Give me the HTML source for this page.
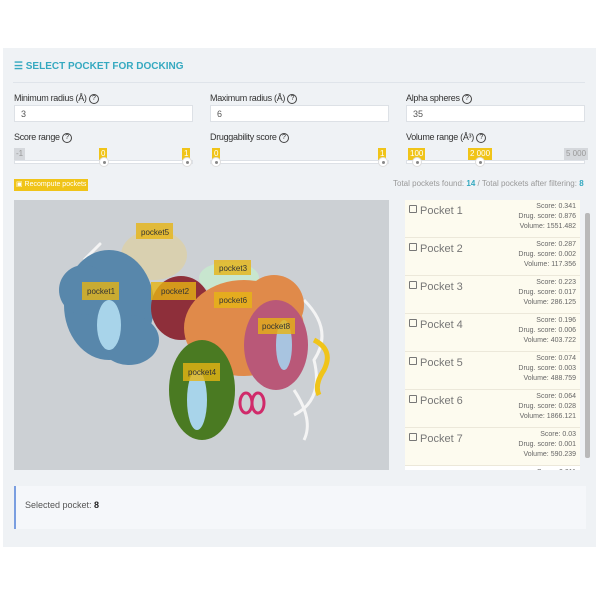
<!DOCTYPE html>
<html><head><style>
body{margin:0;width:600px;height:600px;background:#fff;font-family:"Liberation Sans",sans-serif;position:relative;overflow:hidden}
.panel{position:absolute;left:3px;top:48px;width:593px;height:499px;background:#eff2f5}
.a{position:absolute}
.t{font-size:11px;color:#333;letter-spacing:-0.3px}
.hdr{left:11px;top:13px;font-size:10px;font-weight:bold;color:#35a9c0}
.hr{left:10px;top:34px;width:572px;height:1px;background:#dfe4ea}
.inp{height:17px;background:#fff;border:1px solid #dde1e6;font-size:9px;color:#555;box-sizing:border-box;padding:3px 6px}
.q{display:inline-block;width:8px;height:8px;border:1px solid #444;border-radius:50%;font-size:7px;text-align:center;line-height:8px;vertical-align:1px}
.tag{position:absolute;font-size:8px;color:#fff;background:#f0c419;padding:1px 2px;height:10px;line-height:10px}
.gtag{background:#d5d8dc;color:#999}
.line{position:absolute;height:2px;background:#fff;border:1px solid #dde1e6}
.knob{position:absolute;width:8px;height:8px;border-radius:50%;background:#fff;border:1px solid #ddd}
.knob:after{content:"";position:absolute;left:2.5px;top:2.5px;width:3px;height:3px;border-radius:50%;background:#888}
.item{height:37px;background:#fdfbef;border-bottom:1px solid #ece8da;position:relative}
.item .n{position:absolute;left:4px;top:5px;font-size:11px;color:#777}
.item .n:before{content:"";display:inline-block;width:6px;height:6px;border:1px solid #777;border-radius:1px;margin-right:3px;vertical-align:1px}
.item .s{position:absolute;right:4px;top:2px;font-size:7px;color:#666;text-align:right;line-height:10px}
</style></head><body>
<div class="panel">
<div class="a hdr">&#9776; SELECT POCKET FOR DOCKING</div>
<div class="a hr"></div>
<div class="a t" style="left:11px;top:45px;font-size:9px">Minimum radius (Å) <span class="q">?</span></div>
<div class="a t" style="left:207px;top:45px;font-size:9px">Maximum radius (Å) <span class="q">?</span></div>
<div class="a t" style="left:403px;top:45px;font-size:9px">Alpha spheres <span class="q">?</span></div>
<div class="a inp" style="left:11px;top:57px;width:179px">3</div>
<div class="a inp" style="left:207px;top:57px;width:179px">6</div>
<div class="a inp" style="left:403px;top:57px;width:179px">35</div>
<div class="a t" style="left:11px;top:84px;font-size:9px">Score range <span class="q">?</span></div>
<div class="a t" style="left:207px;top:84px;font-size:9px">Druggability score <span class="q">?</span></div>
<div class="a t" style="left:403px;top:84px;font-size:9px">Volume range (Å³) <span class="q">?</span></div>
<div class="tag gtag" style="left:11px;top:100px">-1</div>
<div class="tag" style="left:96px;top:100px">0</div>
<div class="tag" style="left:179px;top:100px">1</div>
<div class="line" style="left:11px;top:112px;width:177px"></div>
<div class="knob" style="left:96px;top:109px"></div><div class="knob" style="left:179px;top:109px"></div>
<div class="tag" style="left:209px;top:100px">0</div>
<div class="tag" style="left:375px;top:100px">1</div>
<div class="line" style="left:207px;top:112px;width:177px"></div>
<div class="knob" style="left:208px;top:109px"></div><div class="knob" style="left:375px;top:109px"></div>
<div class="tag" style="left:405px;top:100px">100</div>
<div class="tag" style="left:465px;top:100px">2 000</div>
<div class="tag gtag" style="left:561px;top:100px">5 000</div>
<div class="line" style="left:403px;top:112px;width:177px"></div>
<div class="knob" style="left:409px;top:109px"></div><div class="knob" style="left:472px;top:109px"></div>
<div class="tag" style="left:11px;top:131px;font-size:7px">&#9635; Recompute pockets</div>
<div class="a" style="left:390px;top:131px;font-size:8px;color:#999">Total pockets found: <b style="color:#35a9c0">14</b> / Total pockets after filtering: <b style="color:#35a9c0">8</b></div>
<div class="a" style="left:11px;top:152px;width:375px;height:270px;background:#ccd0d4">
<svg width="375" height="270">
<g fill="none" stroke="#f4f4f4" stroke-width="3"><path d="M70 60 Q90 40 85 45"/><path d="M290 100 Q320 130 300 160 Q310 200 280 215"/><path d="M280 190 Q300 220 290 240"/></g>
<path d="M300 140 Q320 150 310 170 Q300 185 305 195" stroke="#f0c419" stroke-width="5" fill="none"/>
<g fill="none" stroke="#d02a6a" stroke-width="3"><ellipse cx="232" cy="203" rx="6" ry="10"/><ellipse cx="244" cy="203" rx="6" ry="10"/></g>
<ellipse cx="140" cy="55" rx="33" ry="25" fill="#d9d0b0"/>
<ellipse cx="95" cy="105" rx="45" ry="55" fill="#5887ab"/>
<ellipse cx="70" cy="90" rx="25" ry="25" fill="#5887ab"/>
<ellipse cx="115" cy="140" rx="30" ry="25" fill="#5887ab"/>
<ellipse cx="95" cy="125" rx="12" ry="25" fill="#a8d4ea"/>
<ellipse cx="215" cy="78" rx="30" ry="16" fill="#c8e6cf"/>
<ellipse cx="167" cy="108" rx="30" ry="32" fill="#8e2f3a"/>
<ellipse cx="230" cy="128" rx="60" ry="48" fill="#e08a4a"/>
<ellipse cx="260" cy="105" rx="30" ry="30" fill="#e08a4a"/>
<ellipse cx="262" cy="145" rx="32" ry="45" fill="#b95878"/>
<ellipse cx="270" cy="145" rx="8" ry="25" fill="#a8c4e0"/>
<ellipse cx="188" cy="190" rx="33" ry="50" fill="#4a7a22"/>
<ellipse cx="183" cy="200" rx="10" ry="30" fill="#a8d4ea"/>
<g fill="rgba(230,180,20,0.8)"><rect x="68" y="82" width="37" height="18"/><rect x="122" y="23" width="37" height="16"/><rect x="137" y="82" width="45" height="18"/><rect x="200" y="60" width="37" height="15"/><rect x="200" y="92" width="38" height="16"/><rect x="244" y="118" width="37" height="16"/><rect x="169" y="163" width="37" height="18"/></g>
<g font-size="8" fill="#333" font-family="Liberation Sans"><text x="73" y="94">pocket1</text><text x="127" y="35">pocket5</text><text x="147" y="94">pocket2</text><text x="205" y="71">pocket3</text><text x="205" y="103">pocket6</text><text x="248" y="129">pocket8</text><text x="174" y="175">pocket4</text></g>
</svg></div>
<div class="a" style="left:402px;top:152px;width:175px;height:270px;overflow:hidden">
<div class="item"><span class="n">Pocket 1</span><span class="s">Score: 0.341<br>Drug. score: 0.876<br>Volume: 1551.482</span></div>
<div class="item"><span class="n">Pocket 2</span><span class="s">Score: 0.287<br>Drug. score: 0.002<br>Volume: 117.356</span></div>
<div class="item"><span class="n">Pocket 3</span><span class="s">Score: 0.223<br>Drug. score: 0.017<br>Volume: 286.125</span></div>
<div class="item"><span class="n">Pocket 4</span><span class="s">Score: 0.196<br>Drug. score: 0.006<br>Volume: 403.722</span></div>
<div class="item"><span class="n">Pocket 5</span><span class="s">Score: 0.074<br>Drug. score: 0.003<br>Volume: 488.759</span></div>
<div class="item"><span class="n">Pocket 6</span><span class="s">Score: 0.064<br>Drug. score: 0.028<br>Volume: 1866.121</span></div>
<div class="item"><span class="n">Pocket 7</span><span class="s">Score: 0.03<br>Drug. score: 0.001<br>Volume: 590.239</span></div>
<div class="item" style="background:#fff"><span class="n">Pocket 8</span><span class="s">Score: 0.011</span></div>
</div>
<div class="a" style="left:582px;top:165px;width:5px;height:245px;background:#b9b9b9;border-radius:2px"></div>
<div class="a" style="left:11px;top:438px;width:572px;height:43px;background:#f5f7fa;border-left:2px solid #7a9ee0;box-sizing:border-box"><div style="position:absolute;left:9px;top:14px;font-size:9px;color:#555">Selected pocket: <b style="color:#222">8</b></div></div>
</div>
</body></html>
